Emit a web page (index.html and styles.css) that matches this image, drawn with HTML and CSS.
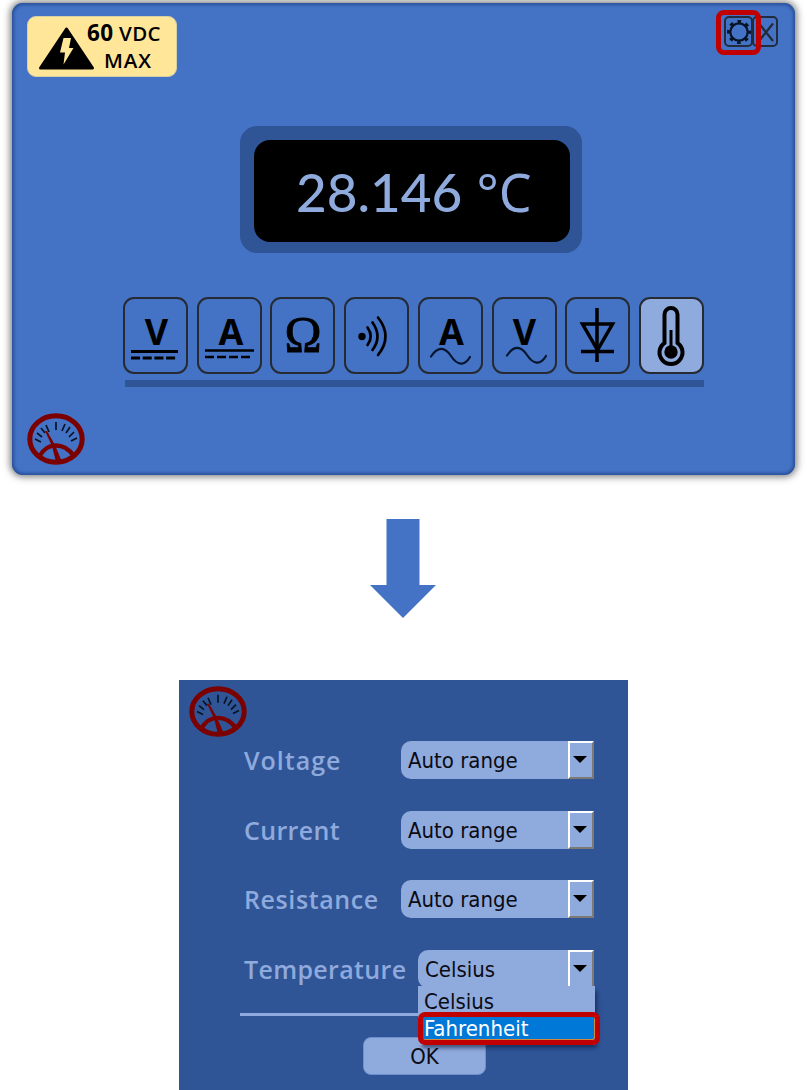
FILE: index.html
```html
<!DOCTYPE html>
<html lang="en">
<head>
<meta charset="utf-8">
<title>Digital multimeter</title>
<link rel="stylesheet" href="styles.css">
</head>
<body>
<svg class="defs" width="0" height="0" aria-hidden="true">
  <symbol id="gauge" viewBox="0 0 58 52" preserveAspectRatio="none">
    <g fill="none" stroke="#7b0000">
      <ellipse cx="29" cy="26" rx="26.2" ry="23.2" stroke-width="5"/>
      <path d="M12 44C17 35 22 32.500 29 32.500S41 35 47 43" stroke-width="4.500"/>
    </g>
    <path d="M18 18l2 0 8 14 7 17h-6l-4-16z" fill="#7b0000"/>
    <path d="M8 26l6 3M10 20l5 4M14 15l4 5M19 12l3 7M29 9v8M38 11l-3 7M43 14l-4 6M47 19l-5 5M50 25l-6 3" stroke="#071426" stroke-width="1.700" fill="none"/>
  </symbol>
</svg>
<main class="page">
  <section class="meter">
    <header class="meter-head">
      <div class="badge">
        <svg class="hazard" width="57" height="44" viewBox="0 0 57 44">
          <path d="M28.500 2L54.500 41H2.500z" stroke="#000" stroke-width="3" stroke-linejoin="round"/>
          <path d="M25.500 11h7.500l-2 10h4.500L25.500 37.500l1.500-12h-5z" fill="#ffe699"/>
        </svg>
        <div class="badge-text"><div><b>60</b> <span class="vdc">VDC</span></div><div class="max">MAX</div></div>
      </div>
      <div class="tools">
        <span class="tool">
          <svg width="30" height="30" viewBox="0 0 30 30"><circle cx="15" cy="15" r="8.700" fill="none" stroke="#071426" stroke-width="2.200"/><circle cx="15" cy="15" r="10" fill="none" stroke="#071426" stroke-width="4" stroke-dasharray="3.400 4.454" stroke-dashoffset="1.700"/></svg>
        </span>
        <span class="tool close">
          <svg width="26" height="30" viewBox="0 0 26 30"><path d="M7 6.500L21 24M21 6.500L7 24" stroke="#222b38" stroke-width="2.200"/></svg>
        </span>
        <span class="callout"></span>
      </div>
    </header>
    <div class="display"><div class="reading">28.146 <span class="unit">°C</span></div></div>
    <nav class="modes">
      <span class="mode"><svg viewBox="0 0 65 76"><text class="letter" x="33.500" y="48">V</text><path d="M8 54.500h47" stroke="#000" stroke-width="3"/><path d="M8 61h45" stroke="#000" stroke-width="3" stroke-dasharray="9 2.700"/></svg></span>
      <span class="mode"><svg viewBox="0 0 65 76"><text class="letter" x="34" y="48">A</text><path d="M8 53.500h49" stroke="#000" stroke-width="2.600"/><path d="M8 60h46" stroke="#000" stroke-width="2.600" stroke-dasharray="9 3"/></svg></span>
      <span class="mode"><svg viewBox="0 0 65 76"><text class="omega" x="33" y="54">Ω</text></svg></span>
      <span class="mode"><svg viewBox="0 0 65 76"><circle cx="18" cy="39.500" r="3.700"/><g fill="none" stroke="#000" stroke-width="2.700" stroke-linecap="round"><path d="M23.500 30.500q6.500 9 0 17.500M28.500 25.500q10 14 0 27.500M34 20.500q15 19 0 37.500"/></g></svg></span>
      <span class="mode"><svg viewBox="0 0 65 76"><text class="letter" x="33.500" y="48">A</text><path class="wave" d="M13 59.500C20 49 27 50 33 59S46 70 52 60"/></svg></span>
      <span class="mode"><svg viewBox="0 0 65 76"><text class="letter" x="32.500" y="48">V</text><path class="wave" d="M15 58.500C22 48 29 49 35 58S48 69 54 59"/></svg></span>
      <span class="mode"><svg viewBox="0 0 65 76"><g fill="none" stroke="#000" stroke-width="3.500"><path d="M32 11v54M16 54.500h33"/><path d="M17.500 27h30L32.500 53z"/></g></svg></span>
      <span class="mode active"><svg viewBox="0 0 65 76"><path d="M25.500 46V17.500a6.500 6.500 0 0 1 13 0V46a11.500 11.500 0 1 1-13 0z" fill="none" stroke="#000" stroke-width="4"/><circle cx="32" cy="55" r="6.700"/><path d="M32 33v18" stroke="#000" stroke-width="3"/></svg></span>
    </nav>
    <div class="mode-rule"></div>
    <svg class="gauge" width="58" height="52"><use href="#gauge"/></svg>
  </section>

  <svg class="arrow" width="66" height="99" viewBox="0 0 66 99"><path d="M16.500 0h33v66H66L33 99 0 66h16.500z" fill="#4472c4"/></svg>

  <section class="settings">
    <svg class="gauge" width="58" height="51"><use href="#gauge"/></svg>
    <div class="fields">
      <div class="field"><span class="label voltage">Voltage</span><div class="select"><span>Auto range</span><i class="drop"></i></div></div>
      <div class="field"><span class="label">Current</span><div class="select"><span>Auto range</span><i class="drop"></i></div></div>
      <div class="field"><span class="label resistance">Resistance</span><div class="select"><span>Auto range</span><i class="drop"></i></div></div>
      <div class="field"><span class="label">Temperature</span>
        <div class="select narrow"><span>Celsius</span><i class="drop"></i>
          <div class="menu"><div class="option">Celsius</div><div class="option chosen">Fahrenheit</div></div>
        </div>
      </div>
    </div>
    <div class="divider"></div>
    <div class="ok">OK</div>
  </section>
</main>
</body>
</html>
```
FILE: styles.css
```css
* { box-sizing: border-box; }
body { margin: 0; background: #fff; }
svg { display: block; }
.defs { position: absolute; }
.page { width: 807px; height: 1090px; padding-top: 3px; overflow: hidden; }

.meter {
  width: 783px; height: 472px; margin-left: 12px; padding: 13px 15px 0;
  display: flex; flex-direction: column;
  background: #4472c4; border-radius: 11px;
  box-shadow: inset 0 0 3px 2px #2a519b, 0 0 7px 2px rgba(0,0,0,.5);
}
.meter-head { display: flex; justify-content: space-between; height: 61px; }
.badge {
  width: 150px; height: 61px; padding: 10px 0 0 10px; display: flex;
  background: #ffe699; border-radius: 9px; border: 1px solid #d5cfa3;
}
.hazard { flex: none; }
.badge-text {
  margin: -8px 0 0 -8px; white-space: nowrap;
  font: 600 20.500px/27px "Open Sans", sans-serif; color: #000;
}
.badge-text b { font-weight: 700; font-size: 22.500px; letter-spacing: .5px; }
.vdc { letter-spacing: .3px; }
.max { padding-left: 17px; letter-spacing: .9px; }
.tools { position: relative; display: flex; margin-right: 2px; }
.tool { width: 29px; height: 31px; border: 2px solid #222c3c; border-radius: 5px; display: flex; align-items: center; justify-content: center; }
.tool svg { flex: none; }
.close { width: 26px; margin-left: -1px; }
.callout { position: absolute; left: -8px; top: -6px; width: 45px; height: 45px; border: 5px solid #c00000; border-radius: 8px; }

.display { width: 342px; height: 127px; margin: 49px 0 0 213px; padding: 14px 12px 11px 14px; background: #2f5597; border-radius: 17px; }
.reading {
  height: 102px; border-radius: 16px; background: #000; color: #8faadc;
  font: 500 53px/104px Lato, sans-serif; padding-left: 42px; white-space: nowrap;
}
.unit { font: 400 52px/1 "Noto Sans", sans-serif; margin-left: 1px; }
.modes { width: 581px; margin: 44px 0 0 96px; display: flex; justify-content: space-between; }
.mode { width: 65px; height: 77px; position: relative; border: 2px solid #262b33; border-radius: 11px; }
.mode svg { width: 65px; height: 76px; margin: -2px; overflow: visible; }
.active { background: #8faadc; }
.letter { font: 700 36px "Open Sans", sans-serif; text-anchor: middle; }
.omega { font: 50px "Liberation Serif", serif; text-anchor: middle; stroke: #000; stroke-width: .8px; }
.wave { fill: none; stroke: #06162e; stroke-width: 2.2; stroke-linecap: round; }
.mode-rule { width: 579px; height: 7px; margin: 6px 0 0 98px; background: #2f5597; }
.meter > .gauge { margin-top: 26px; }

.arrow { margin: 44px 0 0 370px; }

.settings { width: 449px; height: 410px; margin: 62px 0 0 179px; padding: 6px 0 0 10px; background: #2f5597; }
.fields { display: grid; grid-auto-rows: 38px; row-gap: 31.6px; width: 350px; margin: 4px 0 0 55px; }
.field { display: flex; justify-content: space-between; }
.label { font: 600 25px/38px "Open Sans", sans-serif; letter-spacing: .35px; color: #8faadc; white-space: nowrap; }
.voltage { letter-spacing: 1px; }
.resistance { letter-spacing: .6px; }
.select {
  position: relative; width: 193px; height: 38px; padding-left: 7px;
  display: flex; justify-content: space-between;
  background: #8faadc; border-radius: 10px 0 0 10px; color: #0b0b14;
  font: 22px/39px "DejaVu Sans Condensed", "DejaVu Sans", sans-serif; font-stretch: condensed;
}
.narrow { width: 176px; }
.drop {
  width: 26px; height: 38px; border: 2px solid;
  border-color: #fff #7d7974 #7d7974 #fff; display: flex; align-items: center; justify-content: center;
}
.drop::after { content: ""; border: 7px solid transparent; border-top: 7px solid #000; border-bottom: 0; margin: -1px 2px 0 0; }
.menu {
  position: absolute; left: 0; top: 36px; width: 177px; background: #8faadc; z-index: 2;
  box-shadow: 3px 4px 4px -1px rgba(10,25,60,.6);
}
.option { height: 28px; padding-left: 6px; line-height: 31px; }
.chosen {
  width: 182px; height: 33px; margin-top: -2px; padding-left: 1px; line-height: 24px;
  background: #0078d7; color: #fff; border: 5px solid #c00000; border-radius: 7px;
  box-shadow: inset -1px -1px 0 #d18a3c;
}
.divider { width: 210px; height: 3px; margin: 25px 0 0 51px; background: #8faadc; }
.ok {
  width: 123px; height: 38px; margin: 21px 0 0 174px; text-align: center; background: #8faadc; border-radius: 8px;
  font: 22px/37px "DejaVu Sans Condensed", "DejaVu Sans", sans-serif; font-stretch: condensed; color: #0b0b14;
  border: 1px solid #6f8fce;
}
```
